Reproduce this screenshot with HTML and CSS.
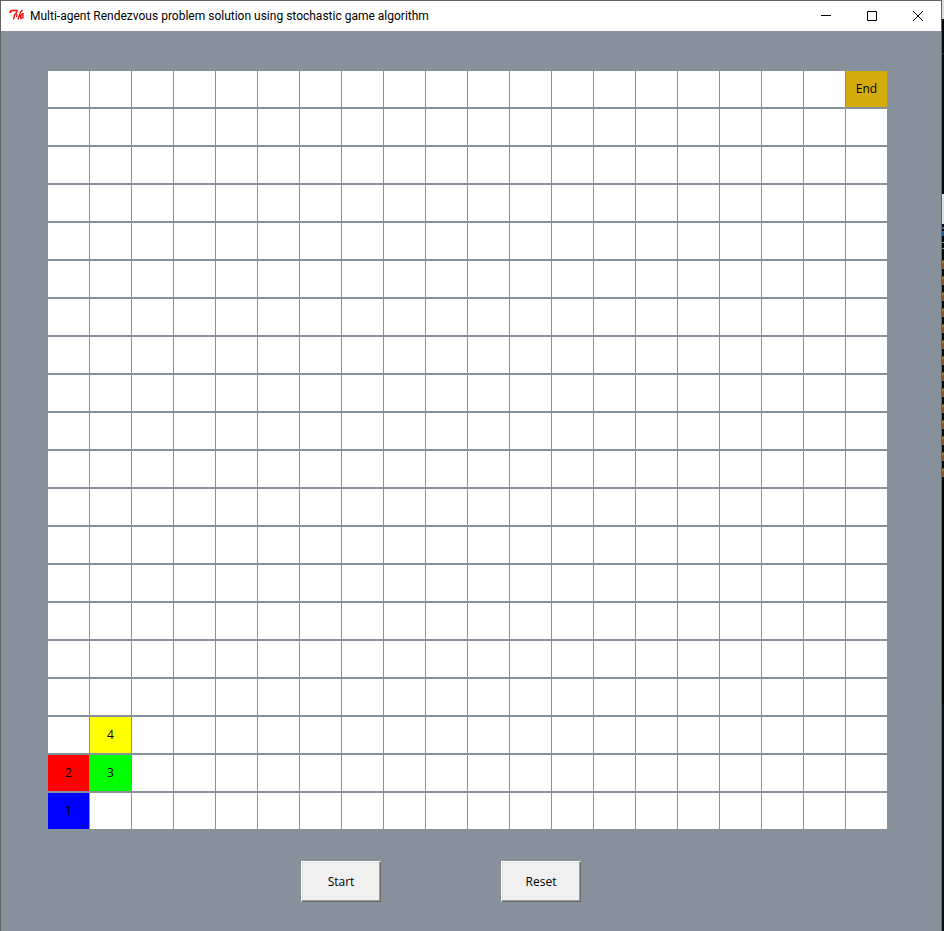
FILE: index.html
```html
<!DOCTYPE html>
<html lang="en">
<head>
<meta charset="utf-8">
<title>Multi-agent Rendezvous problem solution using stochastic game algorithm</title>
<link rel="stylesheet" href="styles.css">
</head>
<body>
<div class="desktop">
  <main class="window">
    <header class="titlebar">
      <svg class="logo" viewBox="0 0 16 16" aria-hidden="true">
        <path d="M1 5V3.500L3 2.500H8V4L5.500 7L4.500 11.500M1 4H2.500M13.500 2L11.500 4L9 11.500M8 6L7.500 9M14.500 5L10.500 8.500M11.500 8L12 10.500L14 9.500V6.500"/>
      </svg>
      <h1 class="title">Multi-agent Rendezvous problem solution using stochastic game algorithm</h1>
      <div class="controls">
        <button class="control" type="button" aria-label="Minimize"><svg viewBox="0 0 10 10"><path d="M0 4.500H10"/></svg></button>
        <button class="control" type="button" aria-label="Maximize"><svg viewBox="0 0 10 10"><path d="M.5 .5H9.500V9.500H.5Z"/></svg></button>
        <button class="control" type="button" aria-label="Close"><svg viewBox="0 0 10 10"><path d="M0 0L10 10M10 0L0 10"/></svg></button>
      </div>
    </header>
    <section class="content">
      <div class="board" id="board"></div>
      <div class="actions">
        <button class="action" type="button">Start</button>
        <button class="action" type="button">Reset</button>
      </div>
    </section>
  </main>
  <div class="backdrop" aria-hidden="true">
    <div class="pane-light"></div>
    <div class="pane-dark"></div>
    <div class="pane-tab"></div>
    <div class="pane-gap"></div>
    <div class="pane-code"></div>
  </div>
</div>
<script src="board.js"></script>
</body>
</html>
```
FILE: styles.css
```css
* { box-sizing: border-box; }

body {
  margin: 0;
  font: 12px/16px "Open Sans", "Noto Sans", sans-serif;
  color: #000;
}

.desktop {
  display: flex;
  min-height: 100vh;
}

.window {
  flex: 1;
  display: flex;
  flex-direction: column;
  border: 1px solid #646464;
  border-bottom: 0;
  background: #86919c;
}

.titlebar {
  display: flex;
  align-items: center;
  height: 30px;
  padding-left: 8px;
  background: #fff;
}

.logo {
  width: 16px;
  height: 16px;
  margin-right: 5px;
  fill: none;
  stroke: #f00;
  stroke-width: 1.3;
}

.title {
  margin: 0;
  font-family: Roboto, "Open Sans", sans-serif;
  font-size: 12px;
  font-weight: 400;
  white-space: nowrap;
}

.controls {
  display: flex;
  margin-left: auto;
}

.control {
  display: flex;
  align-items: center;
  justify-content: center;
  width: 46px;
  height: 30px;
  padding: 0;
  border: 0;
  background: none;
}

.control svg {
  width: 10px;
  height: 10px;
  overflow: visible;
  fill: none;
  stroke: #000;
}

.content {
  flex: 1;
  padding: 40px 54px 29px 47px;
}

.board {
  display: grid;
  grid-template-columns: repeat(20, 1fr);
  grid-auto-rows: 36px;
  gap: 2px 1px;
}

.cell {
  display: flex;
  align-items: center;
  justify-content: center;
  background: #fff;
}

.goal { background: #d4ac0d; }
.yellow { background: #ff0; }
.red { background: #f00; }
.green { background: #0f0; }
.blue { background: #00f; }

.actions {
  display: flex;
  justify-content: center;
  gap: 120px;
  padding: 32px 53px 0 0;
}

.action {
  width: 80px;
  height: 41px;
  padding: 0;
  border: 1px solid;
  border-color: #fff #696969 #696969 #fff;
  background: #f0f0f0;
  box-shadow: inset -1px -1px #a0a0a0, inset 1px 1px #e3e3e3;
  font: inherit;
  color: #000;
}

.backdrop {
  display: flex;
  flex-direction: column;
  width: 2px;
  background: #0b0f1a;
}

.pane-light { height: 19px; background: #dcdcdc; }
.pane-dark { height: 175px; background: linear-gradient(#060914 34px, #262b3a 34px 35px, #060914 35px); }
.pane-tab { height: 30px; background: #e0e0e0; }
.pane-gap { height: 36px; background: linear-gradient(#000 3px, #3d7187 3px 5px, #000 5px 7px, #1c5f92 7px 12px, #000 12px 18px, #899 18px 19px, #000 19px 24px, #899 24px 25px, #000 25px); }
.pane-code { height: 444px; background: repeating-linear-gradient(#8a5522 0 2px, #999 2px 3px, #8a5522 3px 8px, #667f85 8px 9px, #000 9px 16px) top / 100% 218px no-repeat #000; }
```
FILE: board.js
```js
const SIZE = 20;

// Labelled squares, keyed by "row,column" from the top left.
const marked = {
  "0,19": ["End", "goal"],
  "17,1": ["4", "yellow"],
  "18,0": ["2", "red"],
  "18,1": ["3", "green"],
  "19,0": ["1", "blue"]
};

const board = document.getElementById("board");
for (let row = 0; row < SIZE; row++) {
  for (let column = 0; column < SIZE; column++) {
    const cell = document.createElement("div");
    cell.className = "cell";
    const mark = marked[`${row},${column}`];
    if (mark) {
      cell.textContent = mark[0];
      cell.classList.add(mark[1]);
    }
    board.append(cell);
  }
}
```
